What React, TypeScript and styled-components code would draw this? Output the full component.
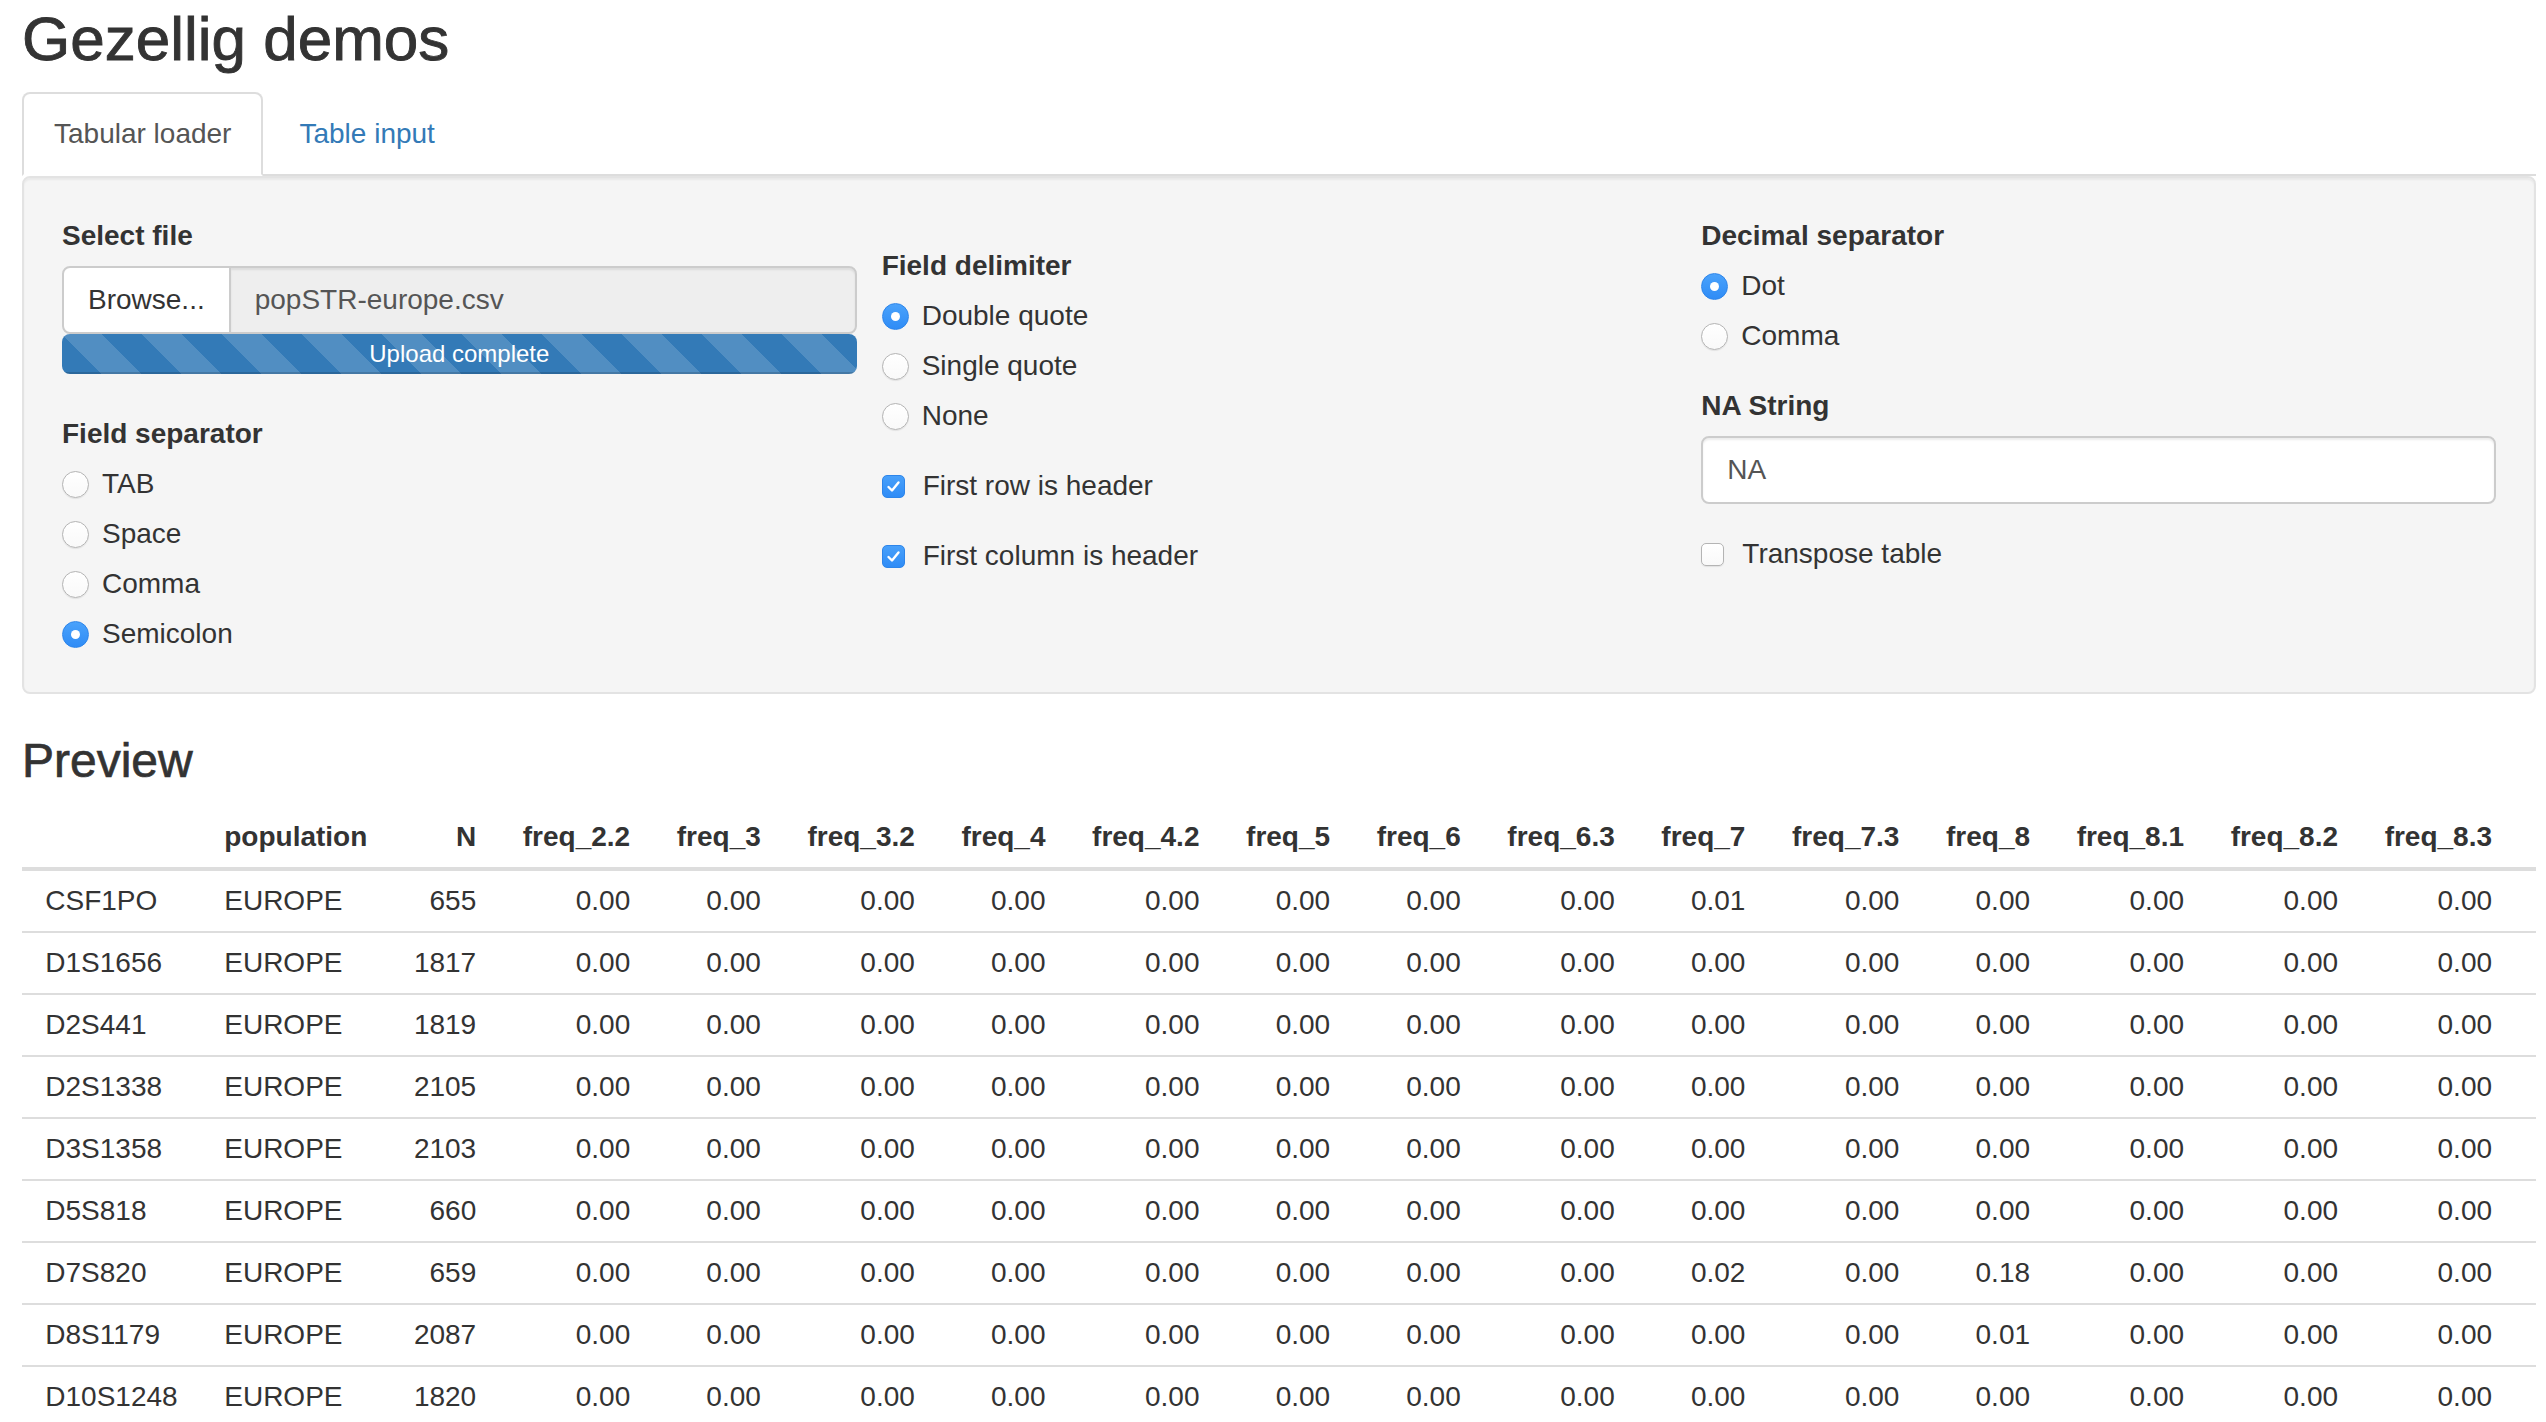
import React from "react";
import styled, { createGlobalStyle, css } from "styled-components";

const GlobalStyle = createGlobalStyle`
  html, body { margin: 0; padding: 0; overflow: hidden; background: #fff; }
  body {
    font-family: "Liberation Sans", Arial, Helvetica, sans-serif;
    font-size: 28px;
    line-height: 40px;
    color: #333;
  }
  * { box-sizing: border-box; }
`;

const Page = styled.div`
  padding: 0 10px 0 22px;
`;

const Title = styled.h2`
  font-size: 62px;
  font-weight: 500;
  line-height: 66px;
  margin: 6px 0 20px;
  color: #333;
  -webkit-text-stroke: 0.9px #333;
`;

const TabList = styled.ul`
  display: flex;
  list-style: none;
  margin: 0;
  padding: 0;
  border-bottom: 2px solid #ddd;
`;

const TabItem = styled.li`
  margin: 0 4px -2px 0;
`;

const TabLink = styled.a<{ $active?: boolean }>`
  display: block;
  padding: 20px 30px;
  line-height: 40px;
  border: 2px solid transparent;
  border-radius: 8px 8px 0 0;
  color: #337ab7;
  text-decoration: none;
  cursor: pointer;
  ${(p) =>
    p.$active &&
    css`
      color: #555;
      background: #fff;
      border-color: #ddd;
      border-bottom-color: transparent;
    `}
`;

const Well = styled.div`
  display: grid;
  grid-template-columns: repeat(3, 1fr);
  column-gap: 25px;
  align-items: start;
  background: #f5f5f5;
  border: 2px solid #e3e3e3;
  border-radius: 8px;
  padding: 38px;
  margin-bottom: 40px;
  box-shadow: inset 0 2px 2px rgba(0, 0, 0, 0.05);
`;

const Column = styled.div<{ $offset?: number }>`
  display: flex;
  flex-direction: column;
  padding-top: ${(p) => p.$offset ?? 0}px;
`;

const FormGroup = styled.div<{ $top?: number }>`
  display: flex;
  flex-direction: column;
  margin-top: ${(p) => p.$top ?? 0}px;
`;

const Label = styled.label`
  display: block;
  font-weight: 700;
  line-height: 40px;
  margin-bottom: 10px;
`;

const Options = styled.div`
  display: flex;
  flex-direction: column;
  gap: 10px;
`;

const Option = styled.label`
  display: flex;
  align-items: center;
  height: 40px;
  line-height: 40px;
  cursor: pointer;
`;

const RadioCircle = styled.span<{ $checked?: boolean }>`
  position: relative;
  flex: none;
  width: 27px;
  height: 27px;
  margin-right: 13px;
  border-radius: 50%;
  ${(p) =>
    p.$checked
      ? css`
          background: linear-gradient(#4aa2fb, #2f8cf6);
          border: 1px solid #2d85ea;
          &::after {
            content: "";
            position: absolute;
            left: 50%;
            top: 50%;
            width: 9px;
            height: 9px;
            margin: -4.5px 0 0 -4.5px;
            border-radius: 50%;
            background: #fff;
          }
        `
      : css`
          background: linear-gradient(#ffffff, #f9f9f9);
          border: 1.5px solid #b4b4b4;
          box-shadow: 0 1px 1px rgba(0, 0, 0, 0.08);
        `}
`;

const CheckBox = styled.span<{ $checked?: boolean }>`
  display: flex;
  align-items: center;
  justify-content: center;
  flex: none;
  width: 23px;
  height: 23px;
  margin-right: 18px;
  border-radius: 5px;
  ${(p) =>
    p.$checked
      ? css`
          background: linear-gradient(#48a0fa, #2f8cf6);
          border: 1px solid #2d85ea;
        `
      : css`
          background: linear-gradient(#ffffff, #f9f9f9);
          border: 1.5px solid #b4b4b4;
          box-shadow: 0 1px 1px rgba(0, 0, 0, 0.08);
        `}
`;

const InputGroup = styled.div`
  display: flex;
  height: 68px;
`;

const BrowseButton = styled.span`
  flex: none;
  padding: 12px 24px;
  line-height: 40px;
  background: #fff;
  color: #333;
  border: 2px solid #ccc;
  border-radius: 8px 0 0 8px;
  margin-right: -2px;
`;

const FileName = styled.input`
  flex: 1;
  min-width: 0;
  height: 68px;
  padding: 12px 24px;
  font: inherit;
  line-height: 40px;
  color: #555;
  background: #eee;
  border: 2px solid #ccc;
  border-radius: 0 8px 8px 0;
  box-shadow: inset 0 2px 2px rgba(0, 0, 0, 0.075);
  outline: none;
`;

const TextInput = styled.input`
  width: 100%;
  height: 68px;
  padding: 12px 24px;
  font: inherit;
  line-height: 40px;
  color: #555;
  background: #fff;
  border: 2px solid #ccc;
  border-radius: 8px;
  box-shadow: inset 0 2px 2px rgba(0, 0, 0, 0.075);
  outline: none;
`;

const Progress = styled.div`
  height: 40px;
  border-radius: 8px;
  overflow: hidden;
  background: #f5f5f5;
`;

const ProgressBar = styled.div`
  height: 100%;
  background-color: #337ab7;
  background-image: linear-gradient(
    45deg,
    rgba(255, 255, 255, 0.15) 25%,
    transparent 25%,
    transparent 50%,
    rgba(255, 255, 255, 0.15) 50%,
    rgba(255, 255, 255, 0.15) 75%,
    transparent 75%,
    transparent
  );
  background-size: 80px 80px;
  box-shadow: inset 0 -2px 0 rgba(0, 0, 0, 0.15);
  color: #fff;
  text-align: center;
  font-size: 24px;
  line-height: 40px;
`;

const SectionTitle = styled.h3`
  font-size: 48px;
  font-weight: 500;
  line-height: 53px;
  margin: 0 0 20px;
  color: #333;
  -webkit-text-stroke: 0.7px #333;
`;

const Table = styled.table`
  width: 100%;
  border-collapse: collapse;
  border-spacing: 0;
`;

const HeadCell = styled.th<{ $right?: boolean }>`
  padding: 10px 23.3px;
  line-height: 40px;
  font-weight: 700;
  white-space: nowrap;
  vertical-align: bottom;
  text-align: ${(p) => (p.$right ? "right" : "left")};
  border-bottom: 4px solid #ddd;
`;

const Cell = styled.td<{ $right?: boolean }>`
  padding: 10px 23.3px;
  line-height: 40px;
  white-space: nowrap;
  text-align: ${(p) => (p.$right ? "right" : "left")};
  border-top: 2px solid #ddd;
`;

const FillerHead = styled.th`
  width: 100%;
  padding: 0;
  border-bottom: 4px solid #ddd;
`;

const FillerCell = styled.td`
  width: 100%;
  padding: 0;
  border-top: 2px solid #ddd;
`;

const CheckMark = () => (
  <svg width="15" height="15" viewBox="0 0 15 15">
    <polyline
      points="2.5,8 6,11.5 12.5,3.5"
      fill="none"
      stroke="#fff"
      strokeWidth="2.4"
      strokeLinecap="round"
      strokeLinejoin="round"
    />
  </svg>
);

const Radio = ({ label, checked }: { label: string; checked?: boolean }) => (
  <Option>
    <RadioCircle $checked={checked} />
    {label}
  </Option>
);

const Check = ({ label, checked }: { label: string; checked?: boolean }) => (
  <Option>
    <CheckBox $checked={checked}>{checked && <CheckMark />}</CheckBox>
    {label}
  </Option>
);

const freqCols = [
  "freq_2.2",
  "freq_3",
  "freq_3.2",
  "freq_4",
  "freq_4.2",
  "freq_5",
  "freq_6",
  "freq_6.3",
  "freq_7",
  "freq_7.3",
  "freq_8",
  "freq_8.1",
  "freq_8.2",
  "freq_8.3",
];

type Row = { name: string; n: number; over?: Record<string, string> };

const rows: Row[] = [
  { name: "CSF1PO", n: 655, over: { freq_7: "0.01" } },
  { name: "D1S1656", n: 1817 },
  { name: "D2S441", n: 1819 },
  { name: "D2S1338", n: 2105 },
  { name: "D3S1358", n: 2103 },
  { name: "D5S818", n: 660 },
  { name: "D7S820", n: 659, over: { freq_7: "0.02", freq_8: "0.18" } },
  { name: "D8S1179", n: 2087, over: { freq_8: "0.01" } },
  { name: "D10S1248", n: 1820 },
];

export default function App() {
  return (
    <>
      <GlobalStyle />
      <Page>
        <Title>Gezellig demos</Title>
        <TabList>
          <TabItem>
            <TabLink $active>Tabular loader</TabLink>
          </TabItem>
          <TabItem>
            <TabLink>Table input</TabLink>
          </TabItem>
        </TabList>

        <Well>
          <Column>
            <FormGroup>
              <Label>Select file</Label>
              <InputGroup>
                <BrowseButton>Browse...</BrowseButton>
                <FileName readOnly value="popSTR-europe.csv" />
              </InputGroup>
              <Progress>
                <ProgressBar>Upload complete</ProgressBar>
              </Progress>
            </FormGroup>
            <FormGroup $top={40}>
              <Label>Field separator</Label>
              <Options>
                <Radio label="TAB" />
                <Radio label="Space" />
                <Radio label="Comma" />
                <Radio label="Semicolon" checked />
              </Options>
            </FormGroup>
          </Column>

          <Column $offset={30}>
            <FormGroup>
              <Label>Field delimiter</Label>
              <Options>
                <Radio label="Double quote" checked />
                <Radio label="Single quote" />
                <Radio label="None" />
              </Options>
            </FormGroup>
            <FormGroup $top={30}>
              <Check label="First row is header" checked />
            </FormGroup>
            <FormGroup $top={30}>
              <Check label="First column is header" checked />
            </FormGroup>
          </Column>

          <Column>
            <FormGroup>
              <Label>Decimal separator</Label>
              <Options>
                <Radio label="Dot" checked />
                <Radio label="Comma" />
              </Options>
            </FormGroup>
            <FormGroup $top={30}>
              <Label>NA String</Label>
              <TextInput readOnly value="NA" />
            </FormGroup>
            <FormGroup $top={30}>
              <Check label="Transpose table" />
            </FormGroup>
          </Column>
        </Well>

        <SectionTitle>Preview</SectionTitle>
        <Table>
          <thead>
            <tr>
              <HeadCell />
              <HeadCell>population</HeadCell>
              <HeadCell $right>N</HeadCell>
              {freqCols.map((c) => (
                <HeadCell key={c} $right>
                  {c}
                </HeadCell>
              ))}
              <FillerHead />
            </tr>
          </thead>
          <tbody>
            {rows.map((r) => (
              <tr key={r.name}>
                <Cell>{r.name}</Cell>
                <Cell>EUROPE</Cell>
                <Cell $right>{r.n}</Cell>
                {freqCols.map((c) => (
                  <Cell key={c} $right>
                    {r.over?.[c] ?? "0.00"}
                  </Cell>
                ))}
                <FillerCell />
              </tr>
            ))}
          </tbody>
        </Table>
      </Page>
    </>
  );
}
